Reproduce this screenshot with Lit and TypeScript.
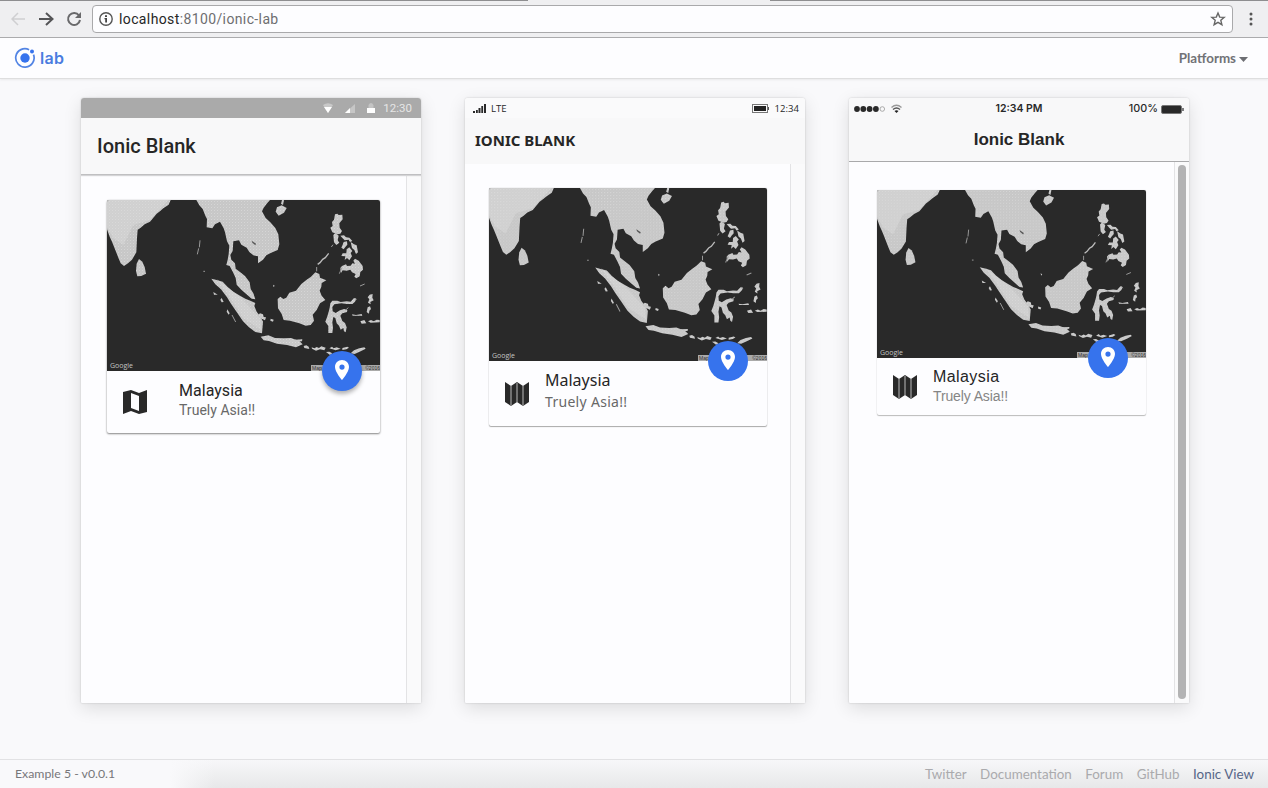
import { LitElement, html, css, svg } from "lit";
import { customElement, property } from "lit/decorators.js";

const land = [
  "M21 15H212L206 29L190 40L178 50L170 56L150 80L134 88L122 98L113 104L111 130L109 172L96 194L84 205L72 213L62 205L55 188L42 155L36 140L29 125L21 103Z",
  "M117 192L127 200L134 216L138 236L124 243L112 244L108 228L110 206Z",
  "M289 15H510L502 24L491 38L486 49L497 69L511 82L526 99L535 118L538 148L533 165L512 174L499 181L489 194L474 205V184L460 181L448 171L440 158L424 149L417 136L400 139L398 168L391 180L394 194L405 205L407 221L421 232L435 243L449 262L452 282L460 295L466 313L455 311L442 300L424 284L410 269L407 249L399 232L389 213L379 210L383 194L386 177L388 152L381 139L375 112L371 100L360 80L345 88L337 100L320 97L321 72L316 62L308 42L298 31Z",
  "M334 251L350 255L368 260L383 276L400 290L420 302L436 311L451 317L466 324L463 333L470 350L482 366L489 380L486 415L466 411L447 397L429 379L410 351L393 326L381 307L363 283L346 268Z",
  "M482 425L505 421L525 429L552 430L573 429L598 438L608 448L588 457L561 450L531 446L507 438L491 436Z",
  "M533 312L541 305L550 312L559 308L568 293L588 287L604 267L619 255L633 245L646 232L658 237L660 248L679 256L665 264L664 275L659 287L665 302L676 315L660 325L650 345L638 359L642 377L632 390L617 392L598 385L570 377L551 375L545 357L534 340Z",
  "M705 58L712 56L716 60L727 59L728 73L718 85L719 98L726 108L721 116L712 118L697 112L691 98L698 93L696 81L702 74Z",
  "M531 37L545 31L560 39L552 53L536 62L527 50Z",
  "M700 120L706 114L716 122L713 136L718 143L709 150L702 142Z M721 122L732 121L738 127L748 128L757 138L750 141L746 134L734 136L728 130Z M731 141L741 139L742 149L736 156L731 163L724 158L728 149Z M752 141L762 148L770 151L774 172L768 177L763 165L756 159Z M740 163L748 157L757 168L752 174L756 184L748 196L741 189L734 195L736 184L724 183L728 175L739 175Z M721 219L726 213L738 208L741 213L752 212L757 205L765 206L760 197L765 191L776 197L788 213L789 224L781 231L779 244L769 250L763 245L767 237L756 232L751 224L740 227L728 226L723 234Z",
  "M689 338L691 325L697 317L712 317L722 321L740 319L752 320L762 309L769 311L765 320L757 327L741 327L724 325L703 328L697 336L698 349L707 354L720 346L733 342L742 345L741 351L727 355L721 362L727 378L735 384L740 397L737 412L732 409L730 399L722 404L717 392L710 385L706 369L700 366L697 382L699 398L697 414L685 414L685 393L676 380L682 364L686 350Z",
  "M611 453L619 451L626 455L628 462L613 459Z M635 457L643 460L650 456L657 459L664 454L677 458L673 466L660 463L648 467L636 461Z M688 460L696 455L701 460L710 457L722 461L707 466L698 463Z M727 459L742 455L747 458L739 463L727 465Z M752 475L762 466L778 460L793 457L797 461L782 469L764 477Z M678 471L688 470L697 475L690 480Z",
  "M781 379L793 375L799 385L785 386Z M804 379L813 375L821 379L830 374L839 375V382L812 383Z M756 358L768 360L785 357L787 362L758 362Z M809 299L818 297L817 308L821 316L811 321L812 328L804 323L808 313L803 307Z M803 337L810 334L813 342L808 347L807 356L800 351Z",
  "M475 359L480 355L489 358L491 366L498 367L495 376L487 372L479 369Z M512 371L521 374L519 380L511 377Z M519 269L524 272L521 277Z M365 309L371 321L365 322L361 314Z M382 343L389 355L386 359L380 350Z M340 291L353 299L342 299Z M546 15L552 15L549 30L543 26Z M585 434L607 433L606 439L589 440Z",
];
const strokes =
  "M300 136L298 157M296 160L292 178M310 229H315M650 216V229M726 218L718 236M694 156L699 149M396 360L407 381M745 338L737 345M780 273L794 267M765 309L769 315";

@customElement("asia-map")
class AsiaMap extends LitElement {
  static styles = css`
    :host { display: block; position: relative; background: #292929; overflow: hidden; }
    svg { display: block; width: 100%; height: 100%; }
    .google { position: absolute; left: 3px; bottom: 0; font: 7px/10px "Open Sans", sans-serif; color: #c4c4c4; }
    .credit { position: absolute; right: 0; bottom: 0; width: 69px; height: 6px; background: #aaa; color: #333; font: 5px/6px "Liberation Sans", sans-serif; display: flex; justify-content: space-between; padding-left: 1px; box-sizing: border-box; white-space: nowrap; }
  `;
  render() {
    return html`
      <svg viewBox="21 15 819 513" preserveAspectRatio="none">
        <defs>
          <pattern id="grain" width="9" height="9" patternUnits="userSpaceOnUse">
            <rect width="9" height="9" fill="#c7c7c7" />
            <rect width="3" height="3" fill="#d6d6d6" />
            <rect x="4" y="5" width="3" height="3" fill="#cfcfcf" />
          </pattern>
        </defs>
        ${land.map((d) => svg`<path d=${d} fill="url(#grain)" />`)}
        <path d="M21 15H205L150 75L100 90L70 150L40 130L21 95Z" fill="#dedede" opacity=".4" />
        <path d="M350 252L420 305L480 370L484 405L430 370L385 300Z" fill="#e0e0e0" opacity=".35" />
        <path d="M455 137L468 146L466 151L457 143Z" fill="#555" />
        <path d=${strokes} fill="none" stroke="#999" stroke-width="3" />
        <path d="M653 208L660 203L668 193L676 188L686 175" fill="none" stroke="#bbb" stroke-width="4" />
      </svg>
      <span class="google">Google</span>
      <span class="credit"><span>Map</span><span>©2016</span></span>
    `;
  }
}

@customElement("place-card")
class PlaceCard extends LitElement {
  @property({ reflect: true }) mode = "md";
  static styles = css`
    :host { display: block; position: relative; background: #fdfdff; color: #262626; border-radius: 2px; box-sizing: border-box; }
    :host([mode="md"]) { width: 273px; height: 233px; margin: 24px 0 0 26px; font-family: Roboto, sans-serif; box-shadow: 0 1px 2px #888, 0 0 2px #ddd; --map: 171px; }
    :host([mode="wp"]) { width: 278px; height: 238px; margin: 24px 0 0 24px; font-family: "Noto Sans", sans-serif; box-shadow: 0 1px 1px #aaa, 0 0 1px #999; --map: 173px; }
    :host([mode="ios"]) { width: 269px; height: 225px; margin: 28px 0 0 28px; font-family: "Liberation Sans", sans-serif; box-shadow: 0 1px 1px #bbb, 0 0 1px #ccc; --map: 168px; }
    asia-map { height: var(--map); border-radius: 2px 2px 0 0; }
    .fab { position: absolute; right: 18px; top: calc(var(--map) - 20px); width: 40px; height: 40px; border-radius: 50%; background: #3673ed; display: grid; place-items: center; }
    :host([mode="md"]) .fab { box-shadow: 0 3px 4px rgba(0, 0, 0, 0.3); }
    :host([mode="wp"]) .fab { right: 19px; }
    .pin { width: 16px; height: 22px; margin-top: -3px; }
    .row { display: flex; align-items: flex-start; }
    .map { display: block; width: 24px; height: 24px; margin: 19px 0 0 16px; flex: none; }
    .text { margin: 9px 0 0 32px; }
    h2 { margin: 0; font-size: 16px; line-height: 22px; font-weight: 400; white-space: nowrap; }
    p { margin: 0; font-size: 14px; line-height: 18px; color: #686868; white-space: nowrap; }
    :host([mode="wp"]) .map { margin-top: 21px; }
    :host([mode="ios"]) .map { margin-top: 17px; }
    :host([mode="wp"]) .text, :host([mode="ios"]) .text { margin-left: 16px; }
    :host([mode="wp"]) .text { margin-top: 8px; }
    :host([mode="wp"]) p { line-height: 22px; letter-spacing: 0.3px; }
    :host([mode="ios"]) .text { margin-top: 8px; }
    :host([mode="ios"]) h2 { letter-spacing: 0.42px; }
    :host([mode="ios"]) p { color: #858585; line-height: 17px; letter-spacing: -0.12px; }
    :host([mode="md"]) h2 { letter-spacing: 0.03px; }
    :host([mode="md"]) p { line-height: 17px; letter-spacing: 0.03px; }
  `;
  render() {
    const icon =
      this.mode === "md"
        ? svg`<path fill-rule="evenodd" d="M0 2L8 0L16 3L24 0V22L16 24L8 21L0 24ZM8 3V18L16 21V6Z" fill="#292929"/>`
        : svg`<path d="M0 0L6 4L12 0L18 4L24 0V20L18 24L12 20L6 24L0 20Z" fill="#292929"/><path d="M6 4V24M12 1V20M18 4V24" stroke="#8a8a8a" stroke-width="1.5"/>`;
    return html`
      <asia-map></asia-map>
      <div class="fab">
        <svg class="pin" viewBox="0 0 16 22">
          <path fill-rule="evenodd" d="M8 1C4 1 1 4 1 8C1 13 8 21 8 21S15 13 15 8C15 4 12 1 8 1ZM8 5.5A2.6 2.6 0 1 1 8 10.7A2.6 2.6 0 1 1 8 5.5Z" fill="#fff" />
        </svg>
      </div>
      <div class="row">
        <svg class="map" viewBox="0 0 24 24">${icon}</svg>
        <div class="text"><h2>Malaysia</h2><p>Truely Asia!!</p></div>
      </div>
    `;
  }
}

@customElement("phone-preview")
class PhonePreview extends LitElement {
  @property({ reflect: true }) mode = "md";
  static styles = css`
    :host { display: flex; flex-direction: column; width: 340px; height: 605px; background: #fdfdff; border-radius: 3px 3px 1px 1px; overflow: hidden; box-shadow: 0 0 2px rgba(0, 0, 0, 0.2), 0 5px 18px rgba(0, 0, 0, 0.12); }
    .status { display: flex; align-items: center; height: 20px; box-sizing: border-box; flex: none; background: #f8f8f9; color: #292929; white-space: nowrap; }
    .bar { display: flex; align-items: center; box-sizing: border-box; flex: none; background: #f8f8f9; color: #262626; }
    .body { display: flex; flex: 1; }
    .page { flex: 1; }
    .track { width: 14px; border-left: 1px solid #e3e3e5; background: #fafafb; }
    .push { flex: 1; }
    .status svg { display: block; flex: none; }

    :host([mode="md"]) .status { background: #aaa; color: #e6e6e6; font: 11.5px/20px Roboto, sans-serif; padding-right: 9px; }
    :host([mode="md"]) .bar { height: 57px; padding-left: 16px; font: 500 20px/24px Roboto, sans-serif; border-bottom: 1px solid #bfbfc1; box-shadow: 0 1px 1px #d4d4d6; z-index: 1; }
    :host([mode="md"]) .body { padding-top: 1px; }
    .md-time { margin-left: 8px; }

    :host([mode="wp"]) .status { font: 9.6px/20px "Open Sans", sans-serif; padding: 0 6px 0 8px; background: #fafafb; }
    :host([mode="wp"]) .bar { height: 46px; padding: 0 0 3px 10px; font: 700 15px/20px "Noto Sans", sans-serif; }
    .lte { margin-left: 5px; padding-top: 2px; }
    .wp-time { margin-left: 6px; padding-top: 2px; }

    :host([mode="ios"]) .status { display: grid; grid-template-columns: 1fr auto 1fr; font: 600 10.5px/20px Inter, sans-serif; padding: 1px 5px 0; }
    :host([mode="ios"]) .bar { height: 44px; padding-top: 1px; justify-content: center; font: 700 17px/20px "Liberation Sans", sans-serif; border-bottom: 1px solid #a9a9ab; }
    .left, .right { display: flex; align-items: center; }
    .right { justify-content: flex-end; gap: 3px; font-weight: 500; font-size: 10.8px; }
    .thumb { width: 8px; height: 534px; margin: 3px 0 0 3px; border-radius: 4px; background: #b3b3b4; }
  `;
  renderStatus() {
    if (this.mode === "md")
      return html`<span class="push"></span>
        <svg width="53" height="12" viewBox="0 0 53 12">
          <path d="M1 3Q6 -0.500 11 3L6 11Z" fill="#c8c8c8" /><path d="M2 5H10L6 11Z" fill="#fff" />
          <path d="M23 11L33 2V11Z" fill="#c6c6c6" /><path d="M23 11L28 6V11Z" fill="#fff" />
          <path d="M45 6H53V11H45Z" fill="#fff" /><path d="M46.500 6V3Q49 -1 51.500 3V6" fill="#c4c4c4" />
        </svg><span class="md-time">12:30</span>`;
    if (this.mode === "wp")
      return html`<svg width="13" height="9" viewBox="0 0 13 9"><path d="M0 7h2v2H0zM3 6h1.8v3H3zM5.500 4h2v5h-2zM8.300 2h1.800v7H8.300zM11 0h2v9h-2z" fill="#292929" /></svg>
        <span class="lte">LTE</span><span class="push"></span>
        <svg width="17" height="9" viewBox="0 0 17 9"><rect x=".5" y=".5" width="15" height="8" fill="none" stroke="#777" /><rect x="2" y="2" width="12" height="5" fill="#222" /><path d="M16 3h1v3h-1z" fill="#555" /></svg>
        <span class="wp-time">12:34</span>`;
    return html`<span class="left">
        <svg width="48" height="10" viewBox="0 0 48 10">
          <g fill="#292929"><circle cx="3" cy="5" r="2.900" /><circle cx="9.300" cy="5" r="2.900" /><circle cx="15.600" cy="5" r="2.900" /><circle cx="21.900" cy="5" r="2.900" /></g>
          <circle cx="28.300" cy="5" r="2.300" fill="none" stroke="#999" stroke-width=".8" />
          <path d="M37.500 3.500Q42.500 -1 47.500 3.500" fill="none" stroke="#999" stroke-width="1.400" /><path d="M39 5.500Q42.500 2.500 46 5.500" fill="none" stroke="#555" stroke-width="1.400" /><path d="M40.500 7Q42.500 5.500 44.500 7L42.500 9Z" fill="#222" />
        </svg></span><span>12:34 PM</span>
      <span class="right">100%<svg width="23" height="9" viewBox="0 0 23 9"><rect x=".5" y=".5" width="20" height="8" rx="1.500" fill="#292929" stroke="#777" /><path d="M22 3v3" stroke="#555" stroke-width="1.500" /></svg></span>`;
  }
  render() {
    return html`
      <div class="status">${this.renderStatus()}</div>
      <div class="bar"><span>${this.mode === "wp" ? "IONIC BLANK" : "Ionic Blank"}</span></div>
      <div class="body">
        <div class="page"><place-card mode=${this.mode}></place-card></div>
        <div class="track">${this.mode === "ios" ? html`<div class="thumb"></div>` : null}</div>
      </div>
    `;
  }
}

@customElement("app-root")
class AppRoot extends LitElement {
  static styles = css`
    :host { display: flex; flex-direction: column; width: 100vw; height: 100vh; overflow: hidden; background: #f9f9fb; font-family: Lato, sans-serif; }
    svg { display: block; flex: none; }
    .chrome { display: flex; align-items: center; height: 38px; box-sizing: border-box; flex: none; background: #efeff1; border-bottom: 1px solid #ababad; padding: 0 13px 0 11px; position: relative; }
    .tabs { position: absolute; inset: 0 0 auto; height: 1px; display: flex; justify-content: space-between; }
    .tabs i { background: #8e8e90; }
    .tabs i:first-child { width: 528px; }
    .tabs i:last-child { width: 498px; }
    .url { display: flex; align-items: center; box-sizing: border-box; width: 1141px; height: 28px; margin: 1px 0 0 10px; padding: 0 6px 0 6px; border: 1px solid #a9a9ab; border-radius: 4px; background: #fdfdff; font: 14px/20px Roboto, sans-serif; color: #6e6e70; white-space: nowrap; }
    .url b { font-weight: 400; color: #262626; }
    .url span { margin-left: 6px; flex: 1; letter-spacing: 0.38px; }
    .more { margin-left: auto; }
    .head { display: flex; align-items: center; height: 41px; box-sizing: border-box; flex: none; background: #fdfdff; border-bottom: 1px solid #dededf; box-shadow: 0 1px 2px #e9e9eb; padding: 0 20px 0 14px; }
    .lab { margin-left: 4px; font: 600 16px/20px Inter, sans-serif; color: #4a7ce0; letter-spacing: 0.3px; }
    .platforms { margin-left: auto; font-size: 13.4px; line-height: 20px; font-weight: 700; color: #717277; }
    .caret { margin: 3px 0 0 3px; }
    .phones { display: flex; flex: 1; gap: 44px; padding: 19px 0 0 81px; }
    .foot { display: flex; align-items: center; height: 29px; box-sizing: border-box; flex: none; border-top: 1px solid #e2e2e4; padding: 0 14px 0 15px; background: linear-gradient(90deg, #f9f9fb 170px, transparent 215px), linear-gradient(#f7f7f9, #e7e8e9); font-size: 12.3px; line-height: 18px; color: #77777a; white-space: nowrap; }
    nav { margin-left: auto; display: flex; gap: 13.500px; font-size: 13.4px; color: #aaaaad; }
    nav .view { color: #566688; }
  `;
  render() {
    return html`
      <div class="chrome">
        <div class="tabs"><i></i><i></i></div>
        <svg width="71" height="16" viewBox="0 0 71 16" fill="none" stroke-width="2">
          <path d="M14 8H1M7 2L1 8L7 14" stroke="#cfcfd1" stroke-width="1.500" />
          <path d="M28 8H41M35 2L41.500 8L35 14" stroke="#545456" />
          <path d="M68 4.500A6 6 0 1 0 69 9" stroke="#69696b" /><path d="M70 1V7H64Z" fill="#69696b" />
        </svg>
        <div class="url">
          <svg width="14" height="14" viewBox="0 0 14 14"><circle cx="7" cy="7" r="6.200" fill="none" stroke="#555" stroke-width="1.400" /><path d="M6 3.200h2v1.800H6zM5.500 6H8v4.500H6.200V7.200H5.500z" fill="#444" /></svg>
          <span><b>localhost</b>:8100/ionic-lab</span>
          <svg width="16" height="16" viewBox="0 0 16 16"><path d="M8 2L9.700 6.100L14.200 6.400L10.800 9.300L11.900 13.700L8 11.300L4.100 13.700L5.200 9.300L1.800 6.400L6.300 6.100Z" fill="none" stroke="#666" stroke-width="1.400" /></svg>
        </div>
        <svg class="more" width="8" height="14" viewBox="0 0 8 14"><g fill="#555"><circle cx="4" cy="2" r="1.500" /><circle cx="4" cy="7" r="1.500" /><circle cx="4" cy="12" r="1.500" /></g></svg>
      </div>
      <div class="head">
        <svg width="22" height="22" viewBox="0 0 22 22"><circle cx="11" cy="11" r="4.700" fill="#3673ed" /><path d="M19.500 7.600A9.200 9.200 0 1 1 15.100 2.700" fill="none" stroke="#5284e4" stroke-width="1.700" /><circle cx="18" cy="4.500" r="2" fill="#3673ed" /></svg>
        <span class="lab">lab</span>
        <span class="platforms">Platforms</span>
        <svg class="caret" width="9" height="5" viewBox="0 0 9 5"><path d="M0 0H9L4.500 5Z" fill="#6d6e73" /></svg>
      </div>
      <div class="phones">
        ${["md", "wp", "ios"].map((m) => html`<phone-preview mode=${m}></phone-preview>`)}
      </div>
      <div class="foot">
        <span>Example 5 - v0.0.1</span>
        <nav><span>Twitter</span><span>Documentation</span><span>Forum</span><span>GitHub</span><span class="view">Ionic View</span></nav>
      </div>
    `;
  }
}
